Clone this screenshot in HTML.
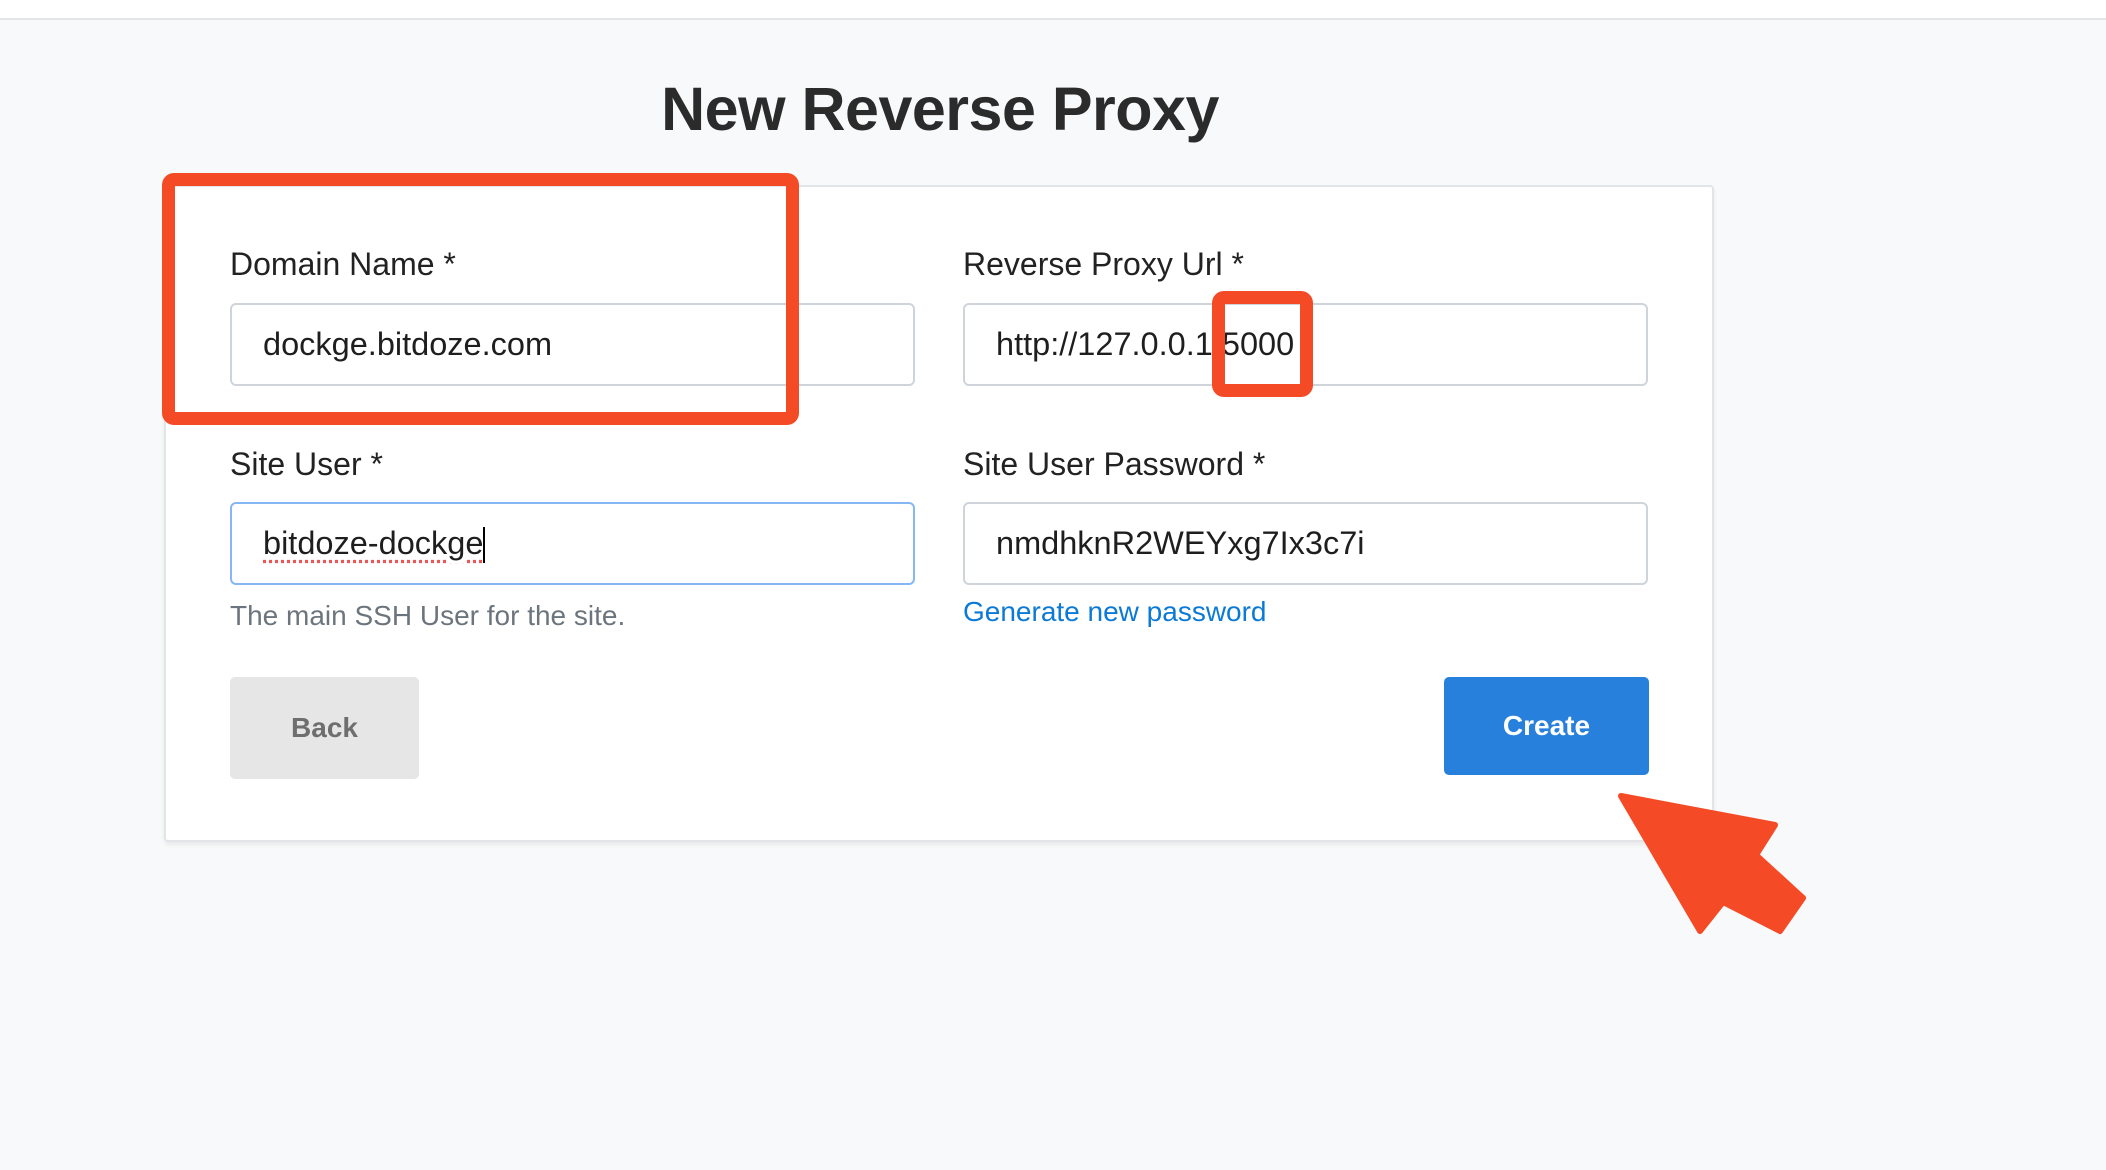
<!DOCTYPE html>
<html><head><meta charset="utf-8"><style>
*{box-sizing:border-box;margin:0;padding:0}
body{width:2106px;height:1170px;background:#f8f9fa;font-family:"Liberation Sans",Arial,sans-serif;position:relative;overflow:hidden;color:#212529}
.top{position:absolute;left:0;top:0;width:2106px;height:20px;background:#fff;border-bottom:2px solid #e3e5e8}
.abs{position:absolute}
h1{position:absolute;left:0;width:1880px;text-align:center;top:74px;font-size:61px;font-weight:bold;color:#2b2b2b;letter-spacing:-0.5px}
.card{left:164px;top:185px;width:1550px;height:657px;background:#fff;border:2px solid #e2e4e7;border-radius:4px;box-shadow:0 3px 4px rgba(0,0,0,0.06)}
.lbl{font-size:32px;color:#222;line-height:1}
.inp{width:685px;height:83px;border:2px solid #ced4da;border-radius:6px;background:#fff;font-size:32.5px;padding-left:31px;line-height:79px;color:#1e1e1e}
.help{font-size:28px;color:#6c757d}
.link{font-size:28px;color:#0b7ad6}
.btn{font-size:28px;font-weight:bold;text-align:center;border-radius:5px}
.rb{border:13px solid #f44a26;border-radius:12px}
</style></head><body>
<div class="top"></div>
<h1>New Reverse Proxy</h1>
<div class="abs card"></div>
<div class="abs lbl" style="left:230px;top:248px">Domain Name *</div>
<div class="abs lbl" style="left:963px;top:248px">Reverse Proxy Url *</div>
<div class="abs inp" style="left:230px;top:303px">dockge.bitdoze.com</div>
<div class="abs inp" style="left:963px;top:303px">http://127.0.0.1:5000</div>
<div class="abs lbl" style="left:230px;top:448px">Site User *</div>
<div class="abs lbl" style="left:963px;top:448px">Site User Password *</div>
<div class="abs inp" style="left:230px;top:502px;border-color:#86b7f5"><span style="text-decoration:underline dotted #e55;text-underline-offset:6px">bitdoze-dockge</span><span style="display:inline-block;width:2px;height:36px;background:#000;vertical-align:middle"></span></div>
<div class="abs inp" style="left:963px;top:502px">nmdhknR2WEYxg7Ix3c7i</div>
<div class="abs help" style="left:230px;top:600px">The main SSH User for the site.</div>
<div class="abs link" style="left:963px;top:596px">Generate new password</div>
<div class="abs btn" style="left:230px;top:677px;width:189px;height:102px;background:#e6e6e6;color:#6e6e6e;line-height:102px">Back</div>
<div class="abs btn" style="left:1444px;top:677px;width:205px;height:98px;background:#2680dc;color:#fff;line-height:98px">Create</div>
<div class="abs rb" style="left:162px;top:173px;width:637px;height:252px"></div>
<div class="abs rb" style="left:1212px;top:291px;width:101px;height:106px"></div>
<svg class="abs" style="left:0;top:0" width="2106" height="1170"><path d="M1621 796 L1775 825 L1756 855 L1803 898 L1780 931 L1723 902 L1700 931 Z" fill="#f44a26" stroke="#f44a26" stroke-width="6" stroke-linejoin="round"/></svg>
</body></html>
